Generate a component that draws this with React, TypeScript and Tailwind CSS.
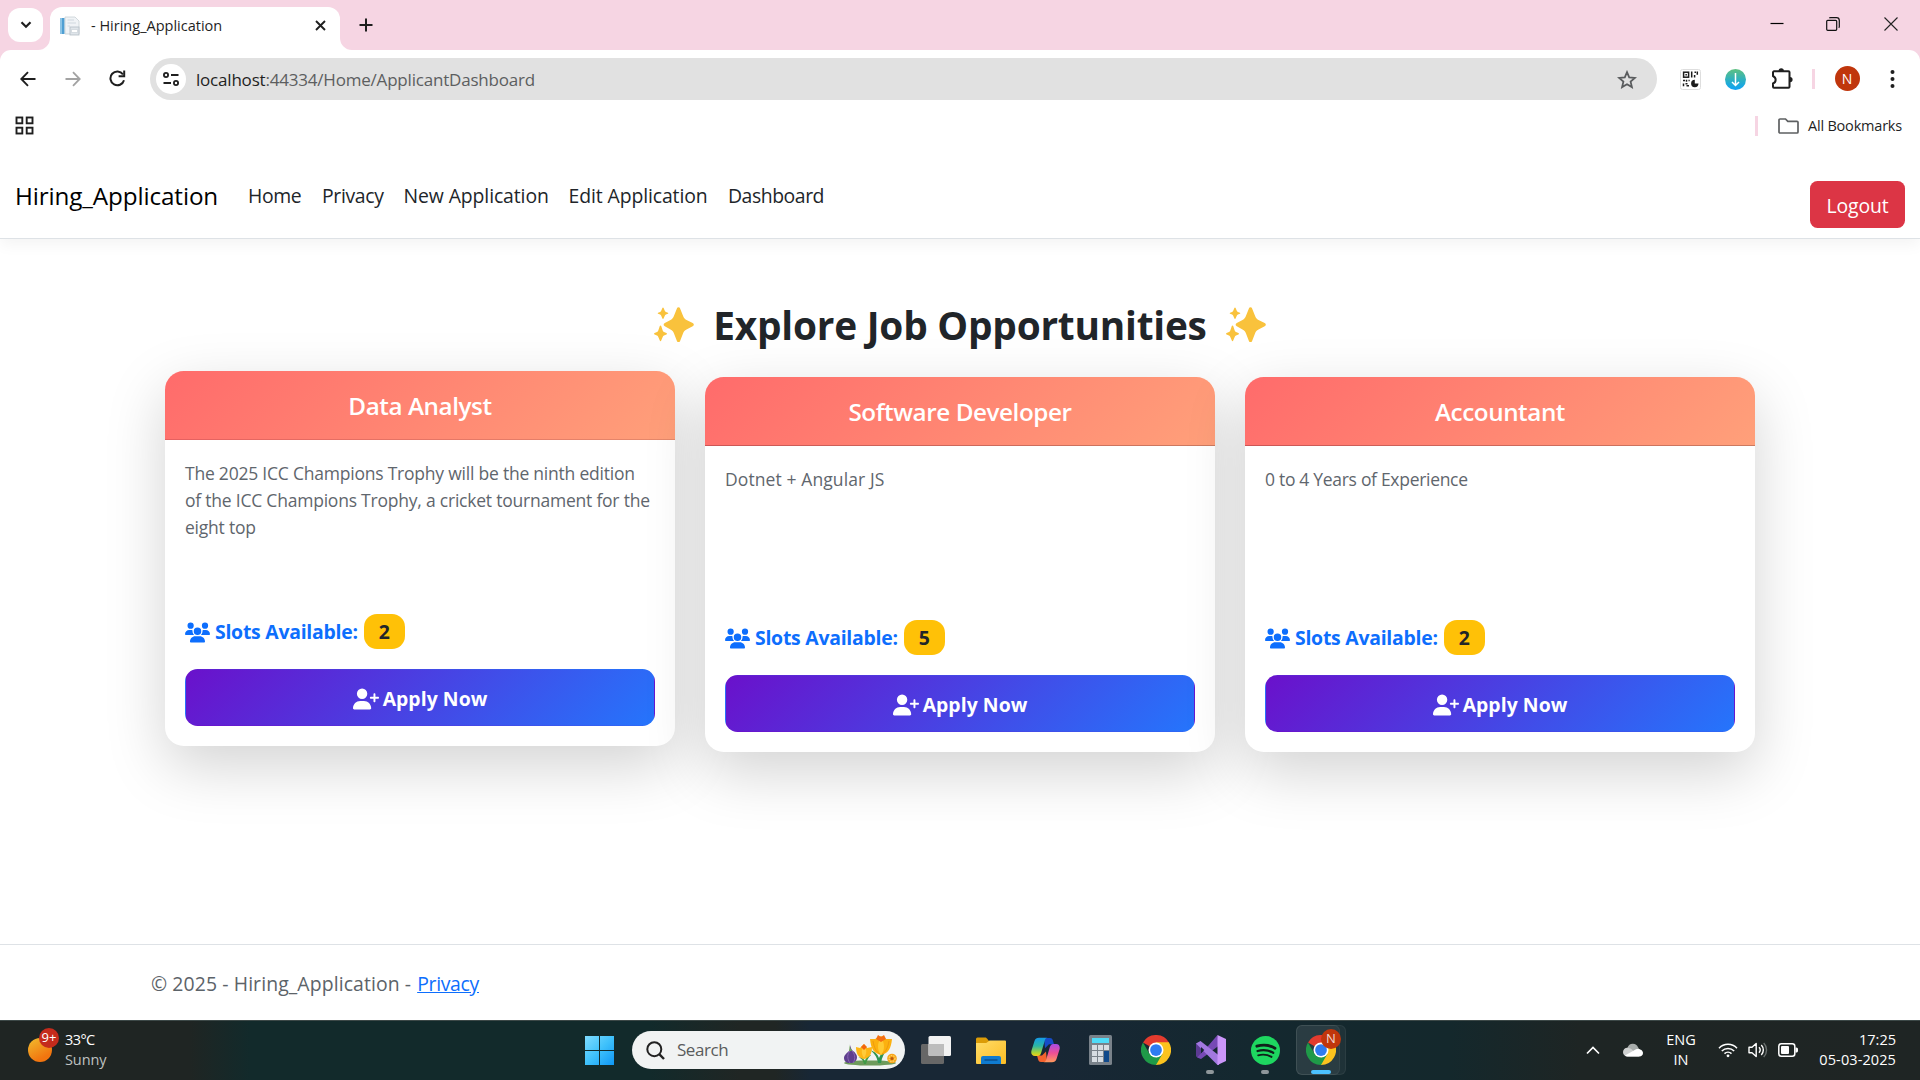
import React from "react";
import { FaUsers, FaUserPlus } from "react-icons/fa6";

/* ---------- Browser chrome ---------- */

function TabStrip() {
  return (
    <div className="flex h-[50px] items-start bg-[#f6d5e3] pl-2 text-[#1f1f1f]">
      <button className="mt-2 flex h-[34px] w-[35px] items-center justify-center rounded-xl bg-white">
        <svg width="12" height="8" viewBox="0 0 12 8" fill="none" stroke="#1f1f1f" strokeWidth="2.2">
          <path d="M1.5 1.2 6 5.7l4.500-4.500" />
        </svg>
      </button>
      <div className="relative mt-[7px] ml-[7px] flex h-[43px] w-[290px] items-center rounded-t-xl bg-white pb-[6px] pl-[10px]">
        <svg className="absolute bottom-0 -left-3" width="12" height="12" viewBox="0 0 12 12">
          <path d="M12 0v12H0A12 12 0 0 0 12 0Z" fill="#fff" />
        </svg>
        <svg className="absolute -right-3 bottom-0" width="12" height="12" viewBox="0 0 12 12">
          <path d="M0 0v12h12A12 12 0 0 1 0 0Z" fill="#fff" />
        </svg>
        <Favicon />
        <span className="ml-[11px] w-[224px] text-[14.5px]">- Hiring_Application</span>
        <svg width="11" height="11" viewBox="0 0 11 11" fill="none" stroke="#1f1f1f" strokeWidth="1.9">
          <path d="m1 1 9 9M10 1l-9 9" />
        </svg>
      </div>
      <svg className="mt-[18px] ml-[19px]" width="14" height="14" viewBox="0 0 14 14" fill="none" stroke="#1f1f1f" strokeWidth="2">
        <path d="M7 .5v13M.5 7h13" />
      </svg>
      <div className="mt-[17px] mr-[22px] ml-auto flex items-center">
        <svg width="14" height="14" viewBox="0 0 14 14">
          <path d="M.5 6.500h13" stroke="#000" strokeWidth="1.200" />
        </svg>
        <svg className="ml-[42px]" width="14" height="14" viewBox="0 0 14 14" fill="none" stroke="#111" strokeWidth="1.200">
          <rect x=".7" y="3.300" width="10" height="10" rx="1" />
          <path d="M3.300 1.200c.3-.4.7-.6 1.200-.6h6c1.600 0 2.800 1.200 2.800 2.800v6c0 .5-.2 1-.6 1.300" />
        </svg>
        <svg className="ml-[44px]" width="14" height="14" viewBox="0 0 14 14" fill="none" stroke="#222" strokeWidth="1.100">
          <path d="m.5 1 13 13M13.500 1l-13 13" transform="translate(0 -.5)" />
        </svg>
      </div>
    </div>
  );
}

function Favicon() {
  return (
    <svg width="20" height="20" viewBox="0 0 20 20">
      <rect x="0" y="2" width="4.600" height="16" fill="#4f9fd3" />
      <rect x="0" y="2" width="2" height="16" fill="#8cc4e6" />
      <path d="M5 1h10l4 4v13H5z" fill="#f0f3f6" stroke="#c8d0d6" strokeWidth=".8" />
      <path d="M7.500 4H14M7.500 7H16M7.500 10H10" stroke="#d0d8df" />
      <rect x="10" y="11" width="9" height="8" fill="#dfe5ea" stroke="#b3bdc6" strokeWidth=".8" />
      <path d="M11.500 13.500h6v3h-6z" fill="#fff" stroke="#c5ccd4" strokeWidth=".6" />
    </svg>
  );
}

function Toolbar() {
  return (
    <div className="bg-[#f6d5e3]">
      <div className="flex h-[57px] items-center rounded-t-[11px] bg-white">
        <svg className="ml-5" width="16" height="16" viewBox="0 0 16 16" fill="none" stroke="#1f1f1f" strokeWidth="1.900">
          <path d="M15.500 8H1.800M8 1.200 1.300 8 8 14.800" />
        </svg>
        <svg className="ml-[29px]" width="16" height="16" viewBox="0 0 16 16" fill="none" stroke="#a3a3a3" strokeWidth="1.800">
          <path d="M.5 8h13.700M8 1.200 14.700 8 8 14.800" />
        </svg>
        <svg className="ml-[28px]" width="17" height="17" viewBox="0 0 17 17" fill="none" stroke="#1f1f1f" strokeWidth="2">
          <path d="M15 10.200A6.900 6.900 0 1 1 14 4.400" />
          <path d="M15.200.6v5.600H9.600" />
        </svg>
        <div className="mt-[1px] ml-6 flex h-[42px] w-[1507px] items-center rounded-full bg-[#e1e1e1] pr-5 pl-[6px]">
          <div className="flex size-[30px] items-center justify-center rounded-full bg-white">
            <svg width="16" height="14" viewBox="0 0 16 14" fill="none" stroke="#1f1f1f" strokeWidth="1.800">
              <circle cx="3" cy="3" r="2.100" />
              <path d="M8 3h7.500M.5 11H8" />
              <circle cx="13" cy="11" r="2.100" />
            </svg>
          </div>
          <span className="mt-[1px] ml-[10px] text-[17px] tracking-[-0.2px] text-[#1f1f1f]">
            localhost<span className="text-[#5c5e60]">:44334/Home/ApplicantDashboard</span>
          </span>
          <svg className="ml-auto" width="20" height="19" viewBox="0 0 20 19" fill="none" stroke="#5a5c5e" strokeWidth="1.800">
            <path d="m10 2.200 2.200 5.200 5.700.5-4.300 3.700 1.300 5.500L10 14.200l-4.900 2.900 1.300-5.500L2.100 7.900l5.700-.5z" />
          </svg>
        </div>
        <svg className="mt-[2px] ml-[23px]" width="21" height="21" viewBox="0 0 21 21">
          <rect x=".5" y=".5" width="20" height="20" rx="2" fill="#fff" stroke="#dedede" />
          <g fill="none" stroke="#1c1c1c" strokeWidth="1.500">
            <rect x="3.600" y="3.200" width="5" height="5" />
            <path d="M11.700 2.500v6M14.500 3.200h1.500M17.300 2.500v3.200M14.600 6v2.500" />
            <path d="M3 11.500h2M6.500 10.800v2M8.500 11.500h1.200M3.500 14.500v2.800M5.500 14.700h2M6.500 16.800h2.500" />
          </g>
          <path d="M14.800 10.800v3.800h3.700a3.700 3.700 0 1 1-3.700-3.800Z" fill="#1c1c1c" />
          <rect x="5.400" y="5" width="1.500" height="1.500" fill="#1c1c1c" />
        </svg>
        <svg className="mt-[2px] ml-6" width="21" height="21" viewBox="0 0 21 21">
          <defs>
            <linearGradient id="dl" x1="0" y1="0" x2="0" y2="1">
              <stop offset="0" stopColor="#5fc080" />
              <stop offset=".6" stopColor="#26aecb" />
              <stop offset="1" stopColor="#0ea2f7" />
            </linearGradient>
          </defs>
          <circle cx="10.500" cy="10.500" r="10.500" fill="url(#dl)" />
          <path d="M10.500 4v12.500M7 13l3.500 3.500L14 13" fill="none" stroke="#fff" strokeWidth="1.500" />
        </svg>
        <svg className="ml-[25px]" width="22" height="22" viewBox="0 0 22 22">
          <path
            d="M3 3.300h14.500a1 1 0 0 1 1 1v14.500a1 1 0 0 1-1 1H3a1 1 0 0 1-1-1v-3.300c3-1 4-5.500 0-7.500V4.300a1 1 0 0 1 1-1Z"
            fill="none"
            stroke="#1f1f1f"
            strokeWidth="2"
          />
          <path d="M7.500 3a2.700 2.700 0 0 1 5.400 0ZM19 9a2.600 2.600 0 0 1 0 5.200Z" fill="#1f1f1f" />
        </svg>
        <div className="ml-[19px] h-5 w-[2.500px] bg-[#f6d5e3]" />
        <div className="ml-5 flex size-[25px] items-center justify-center rounded-full bg-[#c0360c] text-[14px] text-white">
          N
        </div>
        <svg className="ml-[30px]" width="5" height="20" viewBox="0 0 5 20" fill="#1f1f1f">
          <circle cx="2.500" cy="3" r="2" />
          <circle cx="2.500" cy="10" r="2" />
          <circle cx="2.500" cy="17" r="2" />
        </svg>
      </div>
    </div>
  );
}

function BookmarksBar() {
  return (
    <div className="relative z-10 flex h-[37px] items-center bg-white pr-[18px] pl-[15px]">
      <svg width="19" height="19" viewBox="0 0 19 19" fill="none" stroke="#1f1f1f" strokeWidth="1.900">
        <rect x="1.500" y="1.500" width="5.800" height="5.800" />
        <rect x="11.700" y="1.500" width="5.800" height="5.800" />
        <rect x="1.500" y="11.700" width="5.800" height="5.800" />
        <rect x="11.700" y="11.700" width="5.800" height="5.800" />
      </svg>
      <div className="ml-auto h-5 w-[3px] bg-[#f6d5e3]" />
      <svg className="ml-5" width="21" height="16" viewBox="0 0 21 16" fill="none" stroke="#5e6062" strokeWidth="1.700">
        <path d="M2 1h5.500l2.300 2.300H19a1 1 0 0 1 1 1V14a1 1 0 0 1-1 1H2a1 1 0 0 1-1-1V2a1 1 0 0 1 1-1Z" />
      </svg>
      <span className="ml-[9px] text-[14.5px] tracking-[-0.2px] text-[#1f1f1f]">All Bookmarks</span>
    </div>
  );
}

/* ---------- Web page ---------- */

function SiteNav() {
  return (
    <header className="flex h-[95px] shrink-0 items-start border-b border-[#dee2e6] pr-[15px] pl-[15px] text-[19.4px] leading-[30px] text-[#212529] shadow-[0_5px_15px_rgba(0,0,0,0.05)]">
      <a className="mt-[37px] w-[233px] text-[24.25px] tracking-[-0.12px] text-[#000]">Hiring_Application</a>
      <nav className="mt-[37px] flex">
        <a className="w-[74px] tracking-[-0.4px]">Home</a>
        <a className="w-[81.5px] tracking-[-0.35px]">Privacy</a>
        <a className="w-[165px] tracking-[-0.1px]">New Application</a>
        <a className="w-[159.5px] tracking-[-0.1px]">Edit Application</a>
        <a className="tracking-[-0.45px]">Dashboard</a>
      </nav>
      <button className="mt-[37px] ml-auto h-[47px] w-[95px] rounded-[7.500px] bg-[#dc3545] pt-[3px] tracking-[-0.1px] text-white">
        Logout
      </button>
    </header>
  );
}

function Sparkles() {
  return (
    <svg className="mt-[2px]" width="40" height="36" viewBox="0 0 40 36" fill="#f9c23c">
      <path d="M24.500.2c.8 0 1.300.4 1.600 1.200l3 7.700c.7 2 1.600 3 3.400 3.800l6.200 3.100c.9.500 1.100 1 1.100 1.600s-.2 1.200-1.100 1.600l-6.200 3.200c-1.800.8-2.700 1.800-3.400 3.800l-3 7.700c-.3.800-.8 1.200-1.600 1.200s-1.300-.4-1.600-1.200l-3-7.700c-.7-2-1.600-3-3.400-3.800l-5.700-3.200c-.9-.4-1.100-1-1.100-1.600s.2-1.100 1.100-1.600l5.700-3.100c1.800-.8 2.700-1.800 3.400-3.800l3-7.700c.3-.8.800-1.200 1.600-1.200Z" />
      <path d="M9 .4c.3 0 .5.2.6.500l1.300 3c.2.500.5.800 1 1l2 .8c.3.100.4.300.4.500s-.1.400-.4.500l-2 .8c-.5.200-.8.500-1 1l-1.300 3c-.1.300-.3.500-.6.500s-.5-.2-.6-.5l-1.300-3c-.2-.5-.5-.8-1-1l-2-.8c-.3-.1-.4-.3-.4-.5s.1-.4.4-.5l2-.8c.5-.2.800-.5 1-1l1.300-3c.1-.3.3-.5.6-.5Z" />
      <path d="M6.500 18.500c.4 0 .6.300.7.600l1.500 4.300c.3.800.7 1.200 1.300 1.500l2.400 1.100c.4.200.5.400.5.700s-.1.500-.5.700L10 28.500c-.6.300-1 .7-1.300 1.500l-1.500 3.600c-.1.300-.3.600-.7.600s-.6-.3-.7-.6L4.300 30c-.3-.8-.7-1.200-1.300-1.500L.600 27.400c-.4-.2-.5-.4-.5-.7s.1-.5.5-.7L3 24.900c.6-.3 1-.7 1.300-1.500l1.500-4.300c.1-.3.3-.6.7-.6Z" />
    </svg>
  );
}

const jobs = [
  {
    title: "Data Analyst",
    description:
      "The 2025 ICC Champions Trophy will be the ninth edition of the ICC Champions Trophy, a cricket tournament for the eight top",
    slots: 2,
    raised: true,
    tracking: "tracking-[-0.22px]",
  },
  { title: "Software Developer", description: "Dotnet + Angular JS", slots: 5, raised: false, tracking: "tracking-[0.1px]" },
  { title: "Accountant", description: "0 to 4 Years of Experience", slots: 2, raised: false, tracking: "tracking-[-0.3px]" },
];

function JobCard({ title, description, slots, raised, tracking }: (typeof jobs)[number]) {
  return (
    <article
      className={`relative flex h-[375px] w-[510px] flex-col overflow-hidden rounded-[18.75px] bg-white shadow-[0_20px_60px_rgba(0,0,0,0.175)] ${
        raised ? "" : "mt-[6px]"
      }`}
    >
      <h2
        className={`flex h-[69px] items-center justify-center border-b bg-[linear-gradient(135deg,#ff6b6b,#ffa07a)] pt-[2px] text-[24.25px] font-semibold tracking-[-0.43px] text-white ${
          raised ? "border-black/10" : "border-black/20"
        }`}
      >
        {title}
      </h2>
      <div className="flex grow flex-col p-5">
        <p className={`text-[17.5px] leading-[27px] text-[#5f666d] ${tracking}`}>{description}</p>
        <div className="mt-auto flex h-9 items-center text-[19.4px] font-bold text-[#0d6efd]">
          <FaUsers className="mt-[2px] size-[25px]" />
          <span className="mt-[2px] ml-[5px] tracking-[-0.24px]">Slots Available:</span>
          <span className="ml-[6px] flex h-[35px] w-[41px] items-center justify-center rounded-[13px] bg-[#ffc107] pt-[2px] text-[#212529]">
            {slots}
          </span>
        </div>
        <button className="mt-5 flex h-[57px] items-center justify-center rounded-[12.5px] border border-transparent bg-[linear-gradient(135deg,#6a11cb,#2575fc)] pt-[2px] text-[19.4px] font-bold text-white">
          <FaUserPlus className="size-[26px]" />
          <span className="ml-[4px] tracking-[0.05px]">Apply Now</span>
        </button>
      </div>
    </article>
  );
}

function Page() {
  return (
    <div className="flex h-[876px] flex-col bg-white">
      <SiteNav />
      <main className="grow">
        <h1 className="mt-[60px] flex h-[50px] items-center justify-center gap-[19px] text-[38.800px] font-bold tracking-[-0.22px] text-[#212529]">
          <Sparkles />
          <span className="pt-[2px]">Explore Job Opportunities</span>
          <Sparkles />
        </h1>
        <div className="mt-[22px] flex items-start justify-center gap-[30px]">
          {jobs.map((job) => (
            <JobCard key={job.title} {...job} />
          ))}
        </div>
      </main>
      <footer className="flex h-[76px] items-center border-t border-[#dee2e6] pt-[2px] pl-[151px] text-[19.4px] tracking-[0.1px] text-[#5c6369]">
        © 2025 - Hiring_Application -
        <a className="ml-[6px] tracking-[-0.3px] text-[#0d6efd] underline">Privacy</a>
      </footer>
    </div>
  );
}

/* ---------- Windows taskbar ---------- */

function WindowsLogo() {
  return (
    <svg width="29" height="29" viewBox="0 0 29 29">
      <defs>
        <linearGradient id="win" x1="0" y1="0" x2="29" y2="29" gradientUnits="userSpaceOnUse">
          <stop stopColor="#7fdcff" />
          <stop offset=".5" stopColor="#3fc1fb" />
          <stop offset="1" stopColor="#0f97f5" />
        </linearGradient>
      </defs>
      <path d="M0 0h14v14H0zM15 0h14v14H15zM0 15h14v14H0zM15 15h14v14H15z" fill="url(#win)" />
    </svg>
  );
}

function Crocuses() {
  return (
    <svg width="56" height="32" viewBox="0 0 56 32">
      <ellipse cx="27" cy="29" rx="26" ry="2.600" fill="#6d9a5b" />
      <path d="M21 30c-1-5-5-7-6-7 4 0 6 2 7 4 1-4 4-6 6-6-3 3-4 5-5 9Z" fill="#3f9a45" />
      <path d="M35 29c-1-7-5-11-8-13 6 2 8 5 9 8 2-4 4-8 9-10-4 5-6 9-7 15Z" fill="#2f9450" />
      <path d="M7 11c1 3 1 4 3 6 2 1 4 4 4 6 0 4-3 6-7 6s-6-2-6-5 3-5 5-7c1-2 1-4 1-6Z" fill="#5f3f8e" />
      <path d="M6 10c1 3 1 4 3 7H6c1-2 .5-5 0-7Z" fill="#6fae4e" />
      <path d="M7 17c-3 3-3 8 0 12M9 17c4 4 3 9 1 12" stroke="#8a66b5" fill="none" />
      <path d="m13 13 4 1 4-4 3 4 5-1c0 6-2 11-8 12-6-1-8-6-8-12Z" fill="#fdb515" />
      <path d="M21 11c-3 4-3 9 0 13 3-4 3-9 0-13Z" fill="#ffcb3a" />
      <path d="m18 13 3-3 3 3-3 3z" fill="#f2660f" />
      <path d="m27 5 5 0 6-3 5 3 6 0c-1 9-3 14-11 16C30 19 28 14 27 5Z" fill="#fcb10f" />
      <path d="M38 4c-4 5-4 12 0 17 4-5 4-12 0-17Z" fill="#ffcb33" />
      <path d="m33 5 2-4 3 2 3-2 2 4-5 3z" fill="#f46f12" />
      <path d="M30 7c1 6 3 11 7 13M46 7c-1 6-3 11-7 13" fill="none" stroke="#f09a0c" />
      <circle cx="49" cy="24.500" r="4.800" fill="#f8a51b" />
      <circle cx="49" cy="24.500" r="3" fill="none" stroke="#ffd766" strokeWidth="1.200" strokeDasharray="1.500 1" />
      <circle cx="49" cy="24.500" r="1.500" fill="#b9570d" />
    </svg>
  );
}

function TaskViewIcon() {
  return (
    <svg width="30" height="28" viewBox="0 0 30 28">
      <rect x="0" y="8" width="23" height="20" rx="1.500" fill="#676767" />
      <rect x="7.500" y="0" width="22.500" height="20" rx="1.500" fill="#f2f2f2" />
      <path d="M7.500 8H23v12H9a1.500 1.500 0 0 1-1.500-1.500z" fill="#bdbdbd" />
    </svg>
  );
}

function FolderIcon() {
  return (
    <svg width="30" height="27" viewBox="0 0 30 27">
      <defs>
        <linearGradient id="fold" x1="0" y1="0" x2="1" y2="1">
          <stop stopColor="#ffdc68" />
          <stop offset="1" stopColor="#fcbd24" />
        </linearGradient>
      </defs>
      <path d="M0 2a1.500 1.500 0 0 1 1.500-1.500H9c1 0 1.500.5 2 1L13 4v8H0z" fill="#dc9c07" />
      <path d="M0 6h9c1.500 0 2-.5 3-1.300l1.500-1.200H29a1 1 0 0 1 1 1V26a1 1 0 0 1-1 1H1a1 1 0 0 1-1-1z" fill="url(#fold)" />
      <path d="M5 27v-6a2 2 0 0 1 2-2h16a2 2 0 0 1 2 2v6z" fill="#0f7bd0" />
      <path d="M8.500 23h13" stroke="#0a4a86" strokeWidth="1.300" />
    </svg>
  );
}

function CopilotIcon() {
  return (
    <svg width="29" height="26" viewBox="0 0 29 26">
      <defs>
        <linearGradient id="cpA" x1="0" y1="0" x2="0" y2="1">
          <stop stopColor="#149be8" />
          <stop offset=".45" stopColor="#2cb6a4" />
          <stop offset=".85" stopColor="#b8d62c" />
          <stop offset="1" stopColor="#f7c61c" />
        </linearGradient>
        <linearGradient id="cpB" x1="0" y1="0" x2="0" y2="1">
          <stop stopColor="#a94be6" />
          <stop offset=".5" stopColor="#ee4f95" />
          <stop offset="1" stopColor="#ff9a5c" />
        </linearGradient>
      </defs>
      <path d="M13 1h6c1.500 0 2.300.8 2.800 2.200l1.200 4h-5l-4 4z" fill="#164cc8" />
      <path d="M16 25h-6c-1.500 0-2.300-.8-2.800-2.200L6 18.500h5l4-4z" fill="#f4632e" />
      <path d="M8 .8h8.500c-1.500 0-2.200 1-2.700 2.600l-3.600 12.300c-.6 2-1.500 3.300-3.500 3.300H4C.7 19-.3 16.500.5 13.500L3.500 4C4.200 1.800 5.800.8 8 .8Z" fill="url(#cpA)" />
      <path d="M21 25.200h-8.500c1.500 0 2.200-1 2.700-2.600l3.600-12.300c.6-2 1.500-3.300 3.500-3.300H25c3.300 0 4.300 2.500 3.500 5.500L25.500 22c-.7 2.200-2.300 3.200-4.500 3.200Z" fill="url(#cpB)" />
    </svg>
  );
}

function CalculatorIcon() {
  return (
    <svg width="23" height="30" viewBox="0 0 23 30">
      <rect width="23" height="30" rx="1.500" fill="#79828a" />
      <rect x="3" y="3" width="17" height="5" fill="#4fdcf8" />
      <g fill="#d7dde2">
        <path d="M3 10h5v5H3zM9 10h5v5H9zM15 10h5v5h-5zM3 16h5v5H3zM9 16h5v5H9zM3 22h5v5H3zM9 22h5v5H9z" />
      </g>
      <rect x="15" y="16" width="5" height="11" fill="#114a8b" />
    </svg>
  );
}

function ChromeIcon() {
  return (
    <svg width="30" height="30" viewBox="0 0 48 48">
      <path d="M24 24 3.200 12A24 24 0 0 1 44.800 12Z" fill="#e33b2e" />
      <path d="M24 24V12h20.800A24 24 0 0 1 24 48Z" fill="#fcc31e" />
      <path d="M24 48A24 24 0 0 1 3.200 12l10.400 18L24 36l10.400-6Z" fill="#1f9a48" />
      <path d="M24 12h20.800L34 30z" fill="#fcc31e" />
      <circle cx="24" cy="24" r="12" fill="#fff" />
      <circle cx="24" cy="24" r="9.400" fill="#2f7cf0" />
    </svg>
  );
}

function VisualStudioIcon() {
  return (
    <svg width="30" height="30" viewBox="0 0 30 30">
      <path d="M0 8.500 5 6.500V23.500L0 21.500Z" fill="#5b3a92" />
      <path d="M1 22.500 5 24 23 10.500 21.500 0 12.500 10.500Z" fill="#7749b5" />
      <path d="M0 8.500 4.500 6 23 20.500V30h-1.500Z" fill="#a278df" />
      <path d="M21.500 0 30 4v22l-8.500 4Z" fill="#cb96fa" />
      <path d="M5 12v6l3.300-3z" fill="#172632" />
    </svg>
  );
}

function SpotifyIcon() {
  return (
    <svg width="29" height="29" viewBox="0 0 29 29">
      <circle cx="14.500" cy="14.500" r="14.500" fill="#1ed760" />
      <g fill="none" stroke="#10201a" strokeLinecap="round">
        <path d="M5.800 10.200c6-1.700 13.200-1 18.200 2" strokeWidth="2.800" />
        <path d="M6.600 15c5.300-1.500 11.200-.8 15.600 1.800" strokeWidth="2.300" />
        <path d="M7.200 19.300c4.600-1.200 9.400-.6 13.300 1.600" strokeWidth="1.900" />
      </g>
    </svg>
  );
}

function TaskbarApp({ children, indicator }: { children: React.ReactNode; indicator?: boolean }) {
  return (
    <div className="relative flex h-[60px] w-[55px] items-center justify-center">
      {children}
      {indicator && <span className="absolute bottom-[6px] left-[23px] h-1 w-2 rounded-full bg-[#8f979b]" />}
    </div>
  );
}

function Taskbar() {
  return (
    <div className="flex h-[60px] items-center border-t border-[#3c4847] bg-[linear-gradient(90deg,#1f2523_0px,#1f2523_190px,#122a2b_250px,#122a2b_650px,#202624_740px,#202624_775px,#182735_810px,#182735_1050px,#14282f_1250px,#14282c_1450px,#1e2524_1580px,#1f2524_1920px)] pb-[1px] text-white">
      <div className="relative ml-7 size-6 rounded-full bg-[linear-gradient(150deg,#f0bd2e,#f2750f_75%)]">
        <span className="absolute -top-[10px] left-[11px] flex size-5 items-center justify-center rounded-full bg-[#c42b1c] text-[13px]">
          9+
        </span>
      </div>
      <div className="ml-[13px] w-[507px] text-[14.5px] leading-[20px]">
        <div className="tracking-[-0.6px]">33°C</div>
        <div className="tracking-[-0.1px] text-[#bfc2c1]">Sunny</div>
      </div>
      <div className="ml-[13px]">
        <WindowsLogo />
      </div>
      <div className="ml-[18px] flex h-[38px] w-[273px] items-center rounded-full bg-[#f1f3f3] pr-[6px] pl-[14px]">
        <svg width="19" height="19" viewBox="0 0 19 19" fill="none" stroke="#222" strokeWidth="2">
          <circle cx="8.300" cy="8.200" r="7" />
          <path d="m13.200 13.200 4.800 4.800" strokeWidth="2.400" />
        </svg>
        <span className="ml-3 text-[17px] tracking-[-0.45px] text-[#5a5c5c]">Search</span>
        <div className="ml-auto">
          <Crocuses />
        </div>
      </div>
      <div className="ml-[3px] flex">
        <TaskbarApp><TaskViewIcon /></TaskbarApp>
        <TaskbarApp><FolderIcon /></TaskbarApp>
        <TaskbarApp><CopilotIcon /></TaskbarApp>
        <TaskbarApp><CalculatorIcon /></TaskbarApp>
        <TaskbarApp><ChromeIcon /></TaskbarApp>
        <TaskbarApp indicator><VisualStudioIcon /></TaskbarApp>
        <TaskbarApp indicator><SpotifyIcon /></TaskbarApp>
        <div className="relative ml-[3px] flex h-[60px] w-[50px] items-center">
          <span className="absolute inset-y-[5px] left-0 w-[50px] rounded-md border border-white/5 bg-white/5" />
          <span className="absolute inset-y-[5px] left-0 w-[44px] rounded-md border border-white/5 bg-white/5" />
          <div className="relative ml-[10px]">
            <ChromeIcon />
            <span className="absolute -top-[6px] left-[15px] flex size-5 items-center justify-center rounded-full bg-[#c0360c] text-[13px] text-[#f3d9d0]">
              N
            </span>
          </div>
          <span className="absolute bottom-[6px] left-[15px] h-1 w-5 rounded-full bg-[#4cc2ff]" />
        </div>
      </div>
      <svg className="ml-auto" width="14" height="9" viewBox="0 0 14 9" fill="none" stroke="#fff" strokeWidth="1.700">
        <path d="m1 7.500 6-6 6 6" />
      </svg>
      <svg className="ml-[23px]" width="20" height="14" viewBox="0 0 20 14">
        <path d="M4.600 4.500A5.500 5.500 0 0 1 15 4.200L18 9H1z" fill="#a9adac" />
        <path d="M4.500 13.500a4.400 4.400 0 0 1-.2-8.800c1.600 0 2.700.6 4 1.400l8 7.400z" fill="#cfd1d1" />
        <path d="M2 12.500 13 6.300c3-1.200 7 .5 7 3.700 0 2-1.600 3.500-3.500 3.500h-12c-1 0-1.800-.3-2.500-1Z" fill="#fff" />
      </svg>
      <div className="ml-[22px] w-8 text-center text-[14.5px] leading-[20px]">
        <div>ENG</div>
        <div>IN</div>
      </div>
      <svg className="ml-[21px]" width="20" height="16" viewBox="0 0 20 16" fill="none" stroke="#fff" strokeWidth="1.500">
        <path d="M1 6.200a12.500 12.500 0 0 1 18 0" />
        <path d="M3.800 9a8.700 8.700 0 0 1 12.400 0" />
        <path d="M6.500 11.600a5 5 0 0 1 7 0" />
        <circle cx="10" cy="13.800" r="1.400" fill="#fff" stroke="none" />
      </svg>
      <svg className="ml-[10px]" width="20" height="16" viewBox="0 0 20 16" fill="none" stroke="#fff" strokeWidth="1.400">
        <path d="M1 5.300h3L8.200 1.500v13L4 10.700H1z" strokeLinejoin="round" />
        <path d="M11 5.300a4 4 0 0 1 0 5.400M13.300 3a7.200 7.200 0 0 1 0 10" />
        <path d="M15.700 1a10 10 0 0 1 0 14" stroke="#6a706f" />
      </svg>
      <svg className="ml-[10px]" width="20" height="14" viewBox="0 0 20 14">
        <rect x=".8" y=".8" width="16" height="12.400" rx="2.500" fill="none" stroke="#fff" strokeWidth="1.500" />
        <rect x="3" y="3" width="8" height="8" rx="1" fill="#fff" />
        <path d="M17.500 4.500h.8c1 0 1.700.8 1.700 1.800v1.400c0 1-.7 1.800-1.700 1.800h-.8z" fill="#fff" />
      </svg>
      <div className="mr-6 ml-[19px] w-[79px] text-right text-[14.5px] leading-[20px]">
        <div>17:25</div>
        <div className="tracking-[0.1px]">05-03-2025</div>
      </div>
    </div>
  );
}

export default function App() {
  return (
    <div className="flex h-[1080px] w-[1920px] flex-col overflow-hidden bg-white font-['Open_Sans','Noto_Sans',sans-serif] whitespace-nowrap [&_p]:whitespace-normal">
      <TabStrip />
      <Toolbar />
      <BookmarksBar />
      <Page />
      <Taskbar />
    </div>
  );
}
